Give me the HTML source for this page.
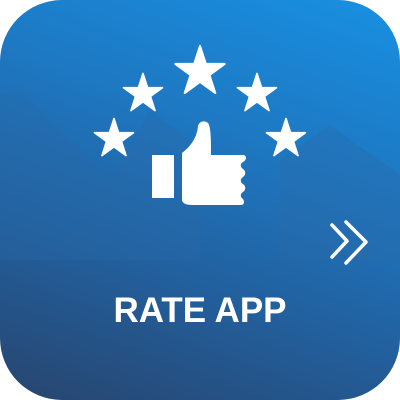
<!DOCTYPE html>
<html><head><style>
html,body{margin:0;padding:0;background:#fff;width:400px;height:400px;overflow:hidden}
.card{position:absolute;left:0;top:0;width:400px;height:400px;border-radius:62px;background:linear-gradient(200deg,#1890e2 0%,#1e78c2 35%,#22609e 65%,#28456e 100%);overflow:hidden}
.t{position:absolute;left:0;width:400px;top:291px;text-align:center;color:#fff;font:bold 35px "Liberation Sans",sans-serif;letter-spacing:0px}
</style></head><body>
<div class="card">
<svg width="400" height="400" style="position:absolute;left:0;top:0">
<g fill="#2a6aa8" opacity="0.35">
<polygon points="0,95 20,90 110,180 110,260 0,260"/>
<polygon points="110,180 150,110 200,150 200,260 110,260"/>
<polygon points="280,160 330,125 400,175 400,260 280,260"/>
</g>
<defs><polygon id="s" points="0,-1 0.2245,-0.309 0.951,-0.309 0.363,0.118 0.588,0.809 0,0.382 -0.588,0.809 -0.363,0.118 -0.951,-0.309 -0.2245,-0.309"/></defs>
<g fill="#fff" stroke="#fff" stroke-linejoin="round" stroke-width="0.08">
<use href="#s" transform="translate(200,72) scale(26)"/>
<use href="#s" transform="translate(143,94) scale(20.5)"/>
<use href="#s" transform="translate(257,94) scale(20.5)"/>
<use href="#s" transform="translate(114,139) scale(20.5)"/>
<use href="#s" transform="translate(286,139) scale(20.5)"/>
</g>
<g fill="#fff">
<rect x="152" y="155" width="22" height="43"/>
<path d="M182,153 C190,147 197,138 198,126 C199,121 205,120 208,123 C211,127 211,140 211,155 L243,155 C247,155 247,160 243,162 C240,164 240,167 243,169 C246,171 246,175 243,177 C240,179 240,182 243,184 C246,186 246,190 243,192 C240,194 240,197 243,199 C245,202 244,205 241,205 L192,205 C186,205 182,203 182,200 Z"/>
</g>
<g fill="none" stroke="#fff" stroke-width="3.5" stroke-linecap="round" stroke-linejoin="round">
<polyline points="332,225 347,241 332,257"/>
<polyline points="346,222 366,242 346,263"/>
</g>
</svg>
<div class="t">RATE APP</div>
</div>
</body></html>
